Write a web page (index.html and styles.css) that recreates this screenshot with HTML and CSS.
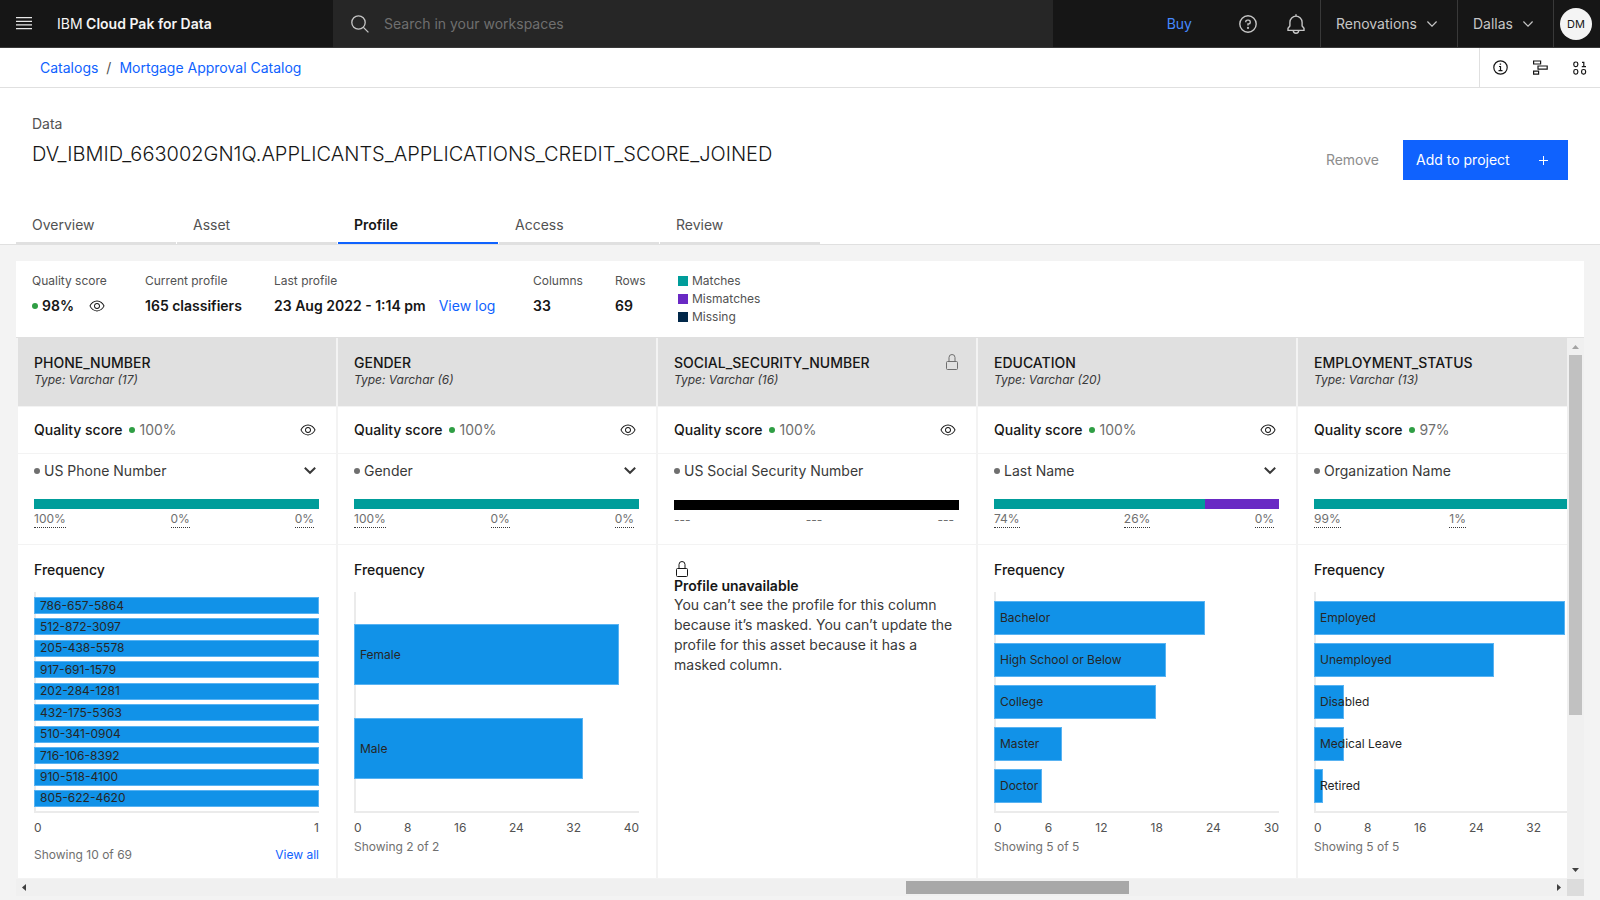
FILE: index.html
```html
<!DOCTYPE html>
<html lang="en">
<head>
<meta charset="utf-8">
<meta name="viewport" content="width=device-width, initial-scale=1">
<title>IBM Cloud Pak for Data</title>
<link rel="stylesheet" href="styles.css">
</head>
<body>
<svg class="sprite" aria-hidden="true">
  <symbol id="eye" viewBox="0 0 16 16"><path d="M15.5 7.8C14.3 4.7 11.3 2.6 8 2.5 4.7 2.6 1.7 4.7.5 7.8v.3c1.2 3.1 4.1 5.2 7.5 5.3 3.3-.1 6.3-2.2 7.5-5.3v-.3zM8 12.5c-2.7 0-5.4-2-6.5-4.5 1-2.5 3.8-4.5 6.5-4.5s5.4 2 6.5 4.5c-1.1 2.5-3.9 4.5-6.5 4.5z"/><path d="M8 5C6.3 5 5 6.3 5 8s1.300 3 3 3 3-1.300 3-3-1.300-3-3-3zm0 5c-1.100 0-2-.9-2-2s.9-2 2-2 2 .9 2 2-.9 2-2 2z"/></symbol>
  <symbol id="lock" viewBox="0 0 16 16"><path fill="none" stroke="currentColor" d="M3.500 7.500h9a1 1 0 0 1 1 1v6a1 1 0 0 1-1 1h-9a1 1 0 0 1-1-1v-6a1 1 0 0 1 1-1zM5 7.500V3.500a3 3 0 0 1 6 0v4"/></symbol>
  <symbol id="chevron" viewBox="0 0 12 8"><path fill="none" stroke="currentColor" stroke-width="2" d="M.8 .8 6 5.800l5.200-5"/></symbol>
  <symbol id="chevron-thin" viewBox="0 0 10 6"><path fill="none" stroke="currentColor" stroke-width="1.200" d="M.4.5 5 5.100 9.600.5"/></symbol>
</svg>

<header class="topbar">
  <div class="brand">
    <button class="icon-button" aria-label="Menu"><svg width="16" height="13" viewBox="0 0 16 13"><path fill="#e8e8e8" d="M0 0h16v1.200H0zM0 3.700h16v1.200H0zM0 7.200h16v1.200H0zM0 11h16v1.200H0z"/></svg></button>
    <span class="brand-name"><span class="brand-prefix">IBM</span> Cloud Pak for Data</span>
  </div>
  <div class="search">
    <svg width="18" height="18" viewBox="0 0 18 18" fill="none" stroke="#c6c6c6" stroke-width="1.300"><circle cx="7.500" cy="7.500" r="6.700"/><path d="m12.400 12.400 5 5"/></svg>
    <input class="search-input" type="search" aria-label="Search in your workspaces" placeholder="Search in your workspaces">
  </div>
  <nav class="top-actions">
    <a class="buy" href="#">Buy</a>
    <button class="top-button" aria-label="Help"><svg width="18" height="18" viewBox="0 0 18 18" fill="none" stroke="#c6c6c6" stroke-width="1.400"><circle cx="9" cy="9" r="8.200"/><path d="M6.800 7.200V6.600c0-.9.700-1.500 1.600-1.500h1.200c.9 0 1.600.700 1.600 1.600v.7c0 .9-.7 1.500-1.600 1.500H9v1.700"/><circle cx="9" cy="12.900" r=".4" fill="#c6c6c6"/></svg></button>
    <button class="top-button" aria-label="Notifications"><svg width="18" height="20" viewBox="0 0 18 20" fill="none" stroke="#c6c6c6" stroke-width="1.400"><path d="M9 .3v2M1 16.400h16v-2.200l-1.900-2.300V8.200a6.100 6.100 0 0 0-12.200 0v3.700L1 14.200zM6.300 16.600a2.700 2.700 0 0 0 5.400 0"/></svg></button>
    <button class="top-menu">Renovations <svg class="thin-chevron"><use href="#chevron-thin"/></svg></button>
    <button class="top-menu">Dallas <svg class="thin-chevron"><use href="#chevron-thin"/></svg></button>
    <div class="account"><button class="avatar">DM</button></div>
  </nav>
</header>

<div class="subbar">
  <nav class="crumbs" aria-label="Breadcrumb"><a href="#">Catalogs</a><span>/</span><a href="#">Mortgage Approval Catalog</a></nav>
  <div class="tools">
    <button class="tool" aria-label="Information"><svg width="15" height="15" viewBox="0 0 15 15" fill="none" stroke="#161616" stroke-width="1.200"><circle cx="7.500" cy="7.500" r="6.700"/><path d="M6 6.500h1.500v4.200M5.500 10.700h4M6.700 4.100h1.400"/></svg></button>
    <button class="tool" aria-label="Lineage"><svg width="15" height="15" viewBox="0 0 15 15" fill="none" stroke="#161616" stroke-width="1.200"><path d="M.6 1h7v3h-7zM5 6h9.200v3.200H5zM.6 11.200h5v3h-5z"/></svg></button>
    <button class="tool" aria-label="Data"><svg width="14" height="14" viewBox="0 0 14 14" fill="none" stroke="#161616" stroke-width="1.200"><rect x=".8" y="1" width="4" height="4.600" rx="1.800"/><rect x=".8" y="8.500" width="4" height="4.600" rx="1.800"/><rect x="8.600" y="8.500" width="4" height="4.600" rx="1.800"/><path d="M9 1.300h1.800v4.300M8.800 5.600H13"/></svg></button>
  </div>
</div>

<section class="page-head">
  <div class="title-row">
    <div>
      <p class="kind">Data</p>
      <h1 class="title">DV_IBMID_663002GN1Q.APPLICANTS_APPLICATIONS_CREDIT_SCORE_JOINED</h1>
    </div>
    <div class="actions">
      <button class="remove">Remove</button>
      <button class="add">Add to project <svg width="9" height="9" viewBox="0 0 9 9"><path stroke="#fff" d="M4.500 0v9M0 4.500h9"/></svg></button>
    </div>
  </div>
  <nav class="tabs">
    <a class="tab" href="#">Overview</a>
    <a class="tab" href="#">Asset</a>
    <a class="tab tab-active" href="#" aria-current="page">Profile</a>
    <a class="tab" href="#">Access</a>
    <a class="tab" href="#">Review</a>
  </nav>
</section>

<main class="content">
  <section class="summary">
    <div><p class="label">Quality score</p><p class="value"><i class="dot dot-green"></i>98% <svg class="eye summary-eye"><use href="#eye"/></svg></p></div>
    <div><p class="label">Current profile</p><p class="value">165 classifiers</p></div>
    <div><p class="label">Last profile</p><p class="value">23 Aug 2022 - 1:14 pm <a class="log" href="#">View log</a></p></div>
    <div><p class="label">Columns</p><p class="value">33</p></div>
    <div><p class="label">Rows</p><p class="value">69</p></div>
    <ul class="legend">
      <li><i class="swatch teal"></i>Matches</li>
      <li><i class="swatch purple"></i>Mismatches</li>
      <li><i class="swatch navy"></i>Missing</li>
    </ul>
  </section>

  <div class="board">
    <div class="viewport">
      <article class="column">
        <header class="col-head"><div><h2 class="col-name">PHONE_NUMBER</h2><p class="col-type">Type: Varchar (17)</p></div></header>
        <div class="quality"><b>Quality score</b><i class="dot dot-green"></i>100%<button class="plain" aria-label="View quality"><svg class="eye"><use href="#eye"/></svg></button></div>
        <div class="match">
          <div class="class-row"><i class="dot"></i>US Phone Number<button class="plain" aria-label="Change class"><svg class="bold-chevron"><use href="#chevron"/></svg></button></div>
          <div class="meter"><span class="teal" style="width:100%"></span></div>
          <div class="shares"><span>100%</span><span>0%</span><span>0%</span></div>
        </div>
        <div class="frequency">
          <h3>Frequency</h3>
          <ul class="chart chart-ten">
            <li><i style="width:100%"></i>786-657-5864</li>
            <li><i style="width:100%"></i>512-872-3097</li>
            <li><i style="width:100%"></i>205-438-5578</li>
            <li><i style="width:100%"></i>917-691-1579</li>
            <li><i style="width:100%"></i>202-284-1281</li>
            <li><i style="width:100%"></i>432-175-5363</li>
            <li><i style="width:100%"></i>510-341-0904</li>
            <li><i style="width:100%"></i>716-106-8392</li>
            <li><i style="width:100%"></i>910-518-4100</li>
            <li><i style="width:100%"></i>805-622-4620</li>
          </ul>
          <div class="ticks"><span>0</span><span>1</span></div>
          <div class="showing showing-more"><span>Showing 10 of 69</span><a href="#">View all</a></div>
        </div>
      </article>

      <article class="column">
        <header class="col-head"><div><h2 class="col-name">GENDER</h2><p class="col-type">Type: Varchar (6)</p></div></header>
        <div class="quality"><b>Quality score</b><i class="dot dot-green"></i>100%<button class="plain" aria-label="View quality"><svg class="eye"><use href="#eye"/></svg></button></div>
        <div class="match">
          <div class="class-row"><i class="dot"></i>Gender<button class="plain" aria-label="Change class"><svg class="bold-chevron"><use href="#chevron"/></svg></button></div>
          <div class="meter"><span class="teal" style="width:100%"></span></div>
          <div class="shares"><span>100%</span><span>0%</span><span>0%</span></div>
        </div>
        <div class="frequency">
          <h3>Frequency</h3>
          <ul class="chart chart-two">
            <li><i style="width:93%"></i>Female</li>
            <li><i style="width:80.500%"></i>Male</li>
          </ul>
          <div class="ticks"><span>0</span><span>8</span><span>16</span><span>24</span><span>32</span><span>40</span></div>
          <div class="showing"><span>Showing 2 of 2</span></div>
        </div>
      </article>

      <article class="column">
        <header class="col-head"><div><h2 class="col-name">SOCIAL_SECURITY_NUMBER</h2><p class="col-type">Type: Varchar (16)</p></div><svg class="lock head-lock"><use href="#lock"/></svg></header>
        <div class="quality"><b>Quality score</b><i class="dot dot-green"></i>100%<button class="plain" aria-label="View quality"><svg class="eye"><use href="#eye"/></svg></button></div>
        <div class="match match-masked">
          <div class="class-row"><i class="dot"></i>US Social Security Number</div>
          <div class="meter"><span class="black" style="width:100%"></span></div>
          <div class="shares shares-none"><span>---</span><span>---</span><span>---</span></div>
        </div>
        <div class="frequency">
          <svg class="lock"><use href="#lock"/></svg>
          <h3 class="masked-title">Profile unavailable</h3>
          <p class="masked-text">You can’t see the profile for this column because it’s masked. You can’t update the profile for this asset because it has a masked column.</p>
        </div>
      </article>

      <article class="column">
        <header class="col-head"><div><h2 class="col-name">EDUCATION</h2><p class="col-type">Type: Varchar (20)</p></div></header>
        <div class="quality"><b>Quality score</b><i class="dot dot-green"></i>100%<button class="plain" aria-label="View quality"><svg class="eye"><use href="#eye"/></svg></button></div>
        <div class="match">
          <div class="class-row"><i class="dot"></i>Last Name<button class="plain" aria-label="Change class"><svg class="bold-chevron"><use href="#chevron"/></svg></button></div>
          <div class="meter"><span class="teal" style="width:74%"></span><span class="purple" style="width:26%"></span></div>
          <div class="shares"><span>74%</span><span>26%</span><span>0%</span></div>
        </div>
        <div class="frequency">
          <h3>Frequency</h3>
          <ul class="chart chart-five">
            <li><i style="width:74%"></i>Bachelor</li>
            <li><i style="width:60.500%"></i>High School or Below</li>
            <li><i style="width:57%"></i>College</li>
            <li><i style="width:24%"></i>Master</li>
            <li><i style="width:17%"></i>Doctor</li>
          </ul>
          <div class="ticks"><span>0</span><span>6</span><span>12</span><span>18</span><span>24</span><span>30</span></div>
          <div class="showing"><span>Showing 5 of 5</span></div>
        </div>
      </article>

      <article class="column">
        <header class="col-head"><div><h2 class="col-name">EMPLOYMENT_STATUS</h2><p class="col-type">Type: Varchar (13)</p></div></header>
        <div class="quality"><b>Quality score</b><i class="dot dot-green"></i>97%</div>
        <div class="match">
          <div class="class-row"><i class="dot"></i>Organization Name</div>
          <div class="meter"><span class="teal" style="width:99%"></span><span class="purple" style="width:1%"></span></div>
          <div class="shares"><span>99%</span><span>1%</span><span>0%</span></div>
        </div>
        <div class="frequency">
          <h3>Frequency</h3>
          <ul class="chart chart-five">
            <li><i style="width:88%"></i>Employed</li>
            <li><i style="width:63%"></i>Unemployed</li>
            <li><i style="width:10.500%"></i>Disabled</li>
            <li><i style="width:10.500%"></i>Medical Leave</li>
            <li><i style="width:3%"></i>Retired</li>
          </ul>
          <div class="ticks"><span>0</span><span>8</span><span>16</span><span>24</span><span>32</span><span>40</span></div>
          <div class="showing"><span>Showing 5 of 5</span></div>
        </div>
      </article>
    </div>

    <div class="scroll scroll-y" aria-hidden="true">
      <svg class="arrow arrow-off" viewBox="0 0 17 17"><path d="M5 11h7L8.500 7z"/></svg>
      <span class="thumb thumb-y"></span><span class="rest-y"></span>
      <svg class="arrow" viewBox="0 0 17 17"><path d="M5 6h7l-3.500 4z"/></svg>
    </div>
    <div class="scroll scroll-x" aria-hidden="true">
      <svg class="arrow" viewBox="0 0 17 17"><path d="M10 5v7L6 8.500z"/></svg>
      <span class="before-x"></span><span class="thumb thumb-x"></span><span class="after-x"></span>
      <svg class="arrow" viewBox="0 0 17 17"><path d="M7 5v7l4-3.500z"/></svg>
    </div>
    <div class="corner"></div>
  </div>
</main>
</body>
</html>
```
FILE: styles.css
```css
* { box-sizing: border-box; }

body {
  margin: 0;
  min-height: 100vh;
  background: #f3f3f3;
  color: #161616;
  font: 14px/18px Inter, "Open Sans", sans-serif;
}

h1, h2, h3, p, ul { margin: 0; padding: 0; font: inherit; }
ul { list-style: none; }
button { border: 0; padding: 0; background: none; color: inherit; font: inherit; cursor: pointer; }
a { color: #0f62fe; text-decoration: none; }
svg { display: block; flex: none; }
.sprite { position: absolute; width: 0; height: 0; }

/* Top bar */
.topbar { display: flex; height: 48px; background: #161616; border-bottom: 1px solid #393939; color: #c6c6c6; }
.brand { display: flex; align-items: center; flex: 0 0 333px; padding-left: 16px; gap: 25px; }
.brand-name { color: #f4f4f4; font-weight: 600; }
.brand-prefix { font-weight: 400; }
.search { display: flex; align-items: center; flex: 0 1 720px; gap: 15px; padding: 0 18px; background: #262626; }
.search-input { flex: 1; min-width: 0; border: 0; outline: 0; padding: 0; background: none; color: #f4f4f4; font: inherit; }
.search-input::placeholder { color: #6f6f6f; opacity: 1; }
.top-actions { display: flex; align-items: stretch; margin-left: auto; }
.buy { align-self: center; padding-right: 32px; color: #4589ff; }
.top-button { display: grid; place-items: center; width: 48px; }
.top-menu { display: flex; align-items: center; justify-content: space-between; gap: 10px; padding: 0 20px 0 15px; border-left: 1px solid #393939; }
.thin-chevron { width: 10px; height: 6px; }
.account { display: grid; place-items: center start; width: 47px; padding-left: 6px; border-left: 1px solid #393939; }
.avatar { width: 32px; height: 32px; border-radius: 50%; background: #f4f4f4; color: #161616; font-size: 11px; }

/* Breadcrumb bar */
.subbar { display: flex; justify-content: space-between; height: 40px; background: #fff; border-bottom: 1px solid #e0e0e0; }
.crumbs { display: flex; align-items: center; gap: 8px; padding-left: 40px; color: #525252; }
.tools { display: flex; border-left: 1px solid #e0e0e0; }
.tool { display: grid; place-items: center; width: 40px; }

/* Page heading */
.page-head { background: #fff; border-bottom: 1px solid #e0e0e0; }
.title-row { display: flex; justify-content: space-between; height: 116px; padding: 27px 32px 0; }
.kind { color: #525252; }
.title { margin-top: 7px; font-size: 20px; line-height: 28px; font-weight: 300; }
.actions { display: flex; align-items: center; align-self: flex-start; gap: 24px; padding-top: 25px; }
.remove { color: #8d8d8d; }
.add { display: flex; align-items: center; justify-content: space-between; width: 165px; height: 40px; padding: 0 20px 0 13px; background: #0f62fe; color: #fff; }
.tabs { display: flex; gap: 1px; padding-left: 16px; }
.tab { width: 160px; height: 40px; padding: 12px 16px 0; border-bottom: 2px solid #e0e0e0; color: #525252; }
.tab-active { border-color: #0f62fe; color: #161616; font-weight: 600; }

/* Summary */
.content { padding: 16px 16px 4px; }
.summary { display: grid; grid-template-columns: 113px 129px 259px 82px 63px auto; height: 77px; padding: 11px 16px 0; background: #fff; border-bottom: 1px solid #e0e0e0; }
.label { font-size: 12px; line-height: 18px; color: #525252; }
.value { display: flex; align-items: center; margin-top: 7px; font-weight: 600; }
.dot { width: 6px; height: 6px; margin-right: 4px; border-radius: 50%; background: #6f6f6f; }
.dot-green { background: #2f9e44; }
.eye { width: 16px; height: 16px; fill: #161616; }
.summary-eye { margin-left: 15px; }
.log { padding-left: 13px; font-weight: 400; }
.legend { font-size: 12px; color: #525252; }
.legend li { display: flex; align-items: center; gap: 4px; }
.swatch { width: 10px; height: 10px; }
.teal { background: #009d9a; }
.purple { background: #6929c4; }
.navy { background: #012749; }
.black { background: #000; }

/* Profile board */
.board { display: grid; grid-template-columns: minmax(0, 1fr) 17px; grid-template-rows: auto 17px; }
.viewport { display: flex; gap: 2px; padding-left: 2px; overflow: hidden; }
.column { flex: 0 0 318px; border-bottom: 1px solid #f3f3f3; background: #fff; }
.col-head { display: flex; justify-content: space-between; padding: 16px 16px 18px; background: #e0e0e0; }
.col-name { font-weight: 500; }
.col-type { font-size: 12px; line-height: 16px; font-style: italic; color: #393939; }
.quality { display: flex; align-items: center; height: 48px; padding: 0 20px 0 16px; border-top: 1px solid #f3f3f3; border-bottom: 1px solid #f3f3f3; color: #6f6f6f; }
.quality b { margin-right: 7px; color: #161616; font-weight: 500; }
.plain { margin-left: auto; }
.match { padding: 0 17px 16px 16px; border-bottom: 1px solid #f3f3f3; }
.class-row { display: flex; align-items: center; height: 34px; margin-bottom: 11px; padding-right: 3px; color: #393939; }
.bold-chevron { width: 12px; height: 8px; }
.meter { display: flex; height: 10px; }
.match-masked { padding-bottom: 15px; }
.match-masked .class-row { margin-bottom: 12px; }
.shares { display: flex; justify-content: space-between; padding-right: 5px; font-size: 12px; color: #6f6f6f; }
.shares span { padding-top: 1px; border-bottom: 1px dotted #393939; line-height: 17px; }
.shares-none span { border-color: transparent; }
.frequency { height: 333px; padding: 16px 17px 0 16px; }
.frequency h3 { font-weight: 500; }
.chart { display: flex; flex-direction: column; justify-content: space-between; height: 221px; margin-top: 13px; border-bottom: 2px solid #ebebeb; background: linear-gradient(#ebebeb, #ebebeb) left / 2px 100% no-repeat; font-size: 12px; color: #262626; }
.chart li { position: relative; z-index: 0; display: flex; align-items: center; padding-left: 6px; }
.chart li i { position: absolute; z-index: -1; inset: 0 auto 0 0; border: 1px solid #59b3f2; background: #1192e8; }
.chart-ten { padding: 5px 0 4px; }
.chart-ten li { height: 17px; }
.chart-five { padding: 9px 0 8px; }
.chart-five li { height: 34px; }
.chart-two { padding: 32px 0; }
.chart-two li { height: 61px; }
.ticks { display: flex; justify-content: space-between; margin-top: 7px; font-size: 12px; line-height: 16px; color: #525252; }
.showing { display: flex; justify-content: space-between; margin-top: 3px; font-size: 12px; line-height: 16px; color: #6f6f6f; }
.showing-more { margin-top: 11px; }
.lock { width: 16px; height: 16px; color: #161616; }
.head-lock { color: #6f6f6f; }
.frequency .masked-title { font-weight: 600; }
.masked-text { line-height: 20px; color: #393939; }

/* Scroll bars */
.scroll { display: flex; background: #f0f0f0; }
.scroll-y { flex-direction: column; }
.arrow { width: 17px; height: 17px; fill: #404040; }
.arrow-off { fill: #a3a3a3; }
.thumb { background: #a8a8a8; }
.thumb-y { flex: 360; margin: 0 2px; background: #c1c1c1; }
.rest-y { flex: 147; }
.thumb-x { flex: 223; margin: 2px 0; }
.before-x { flex: 873; }
.after-x { flex: 421; }
.corner { background: #dcdcdc; }
```
